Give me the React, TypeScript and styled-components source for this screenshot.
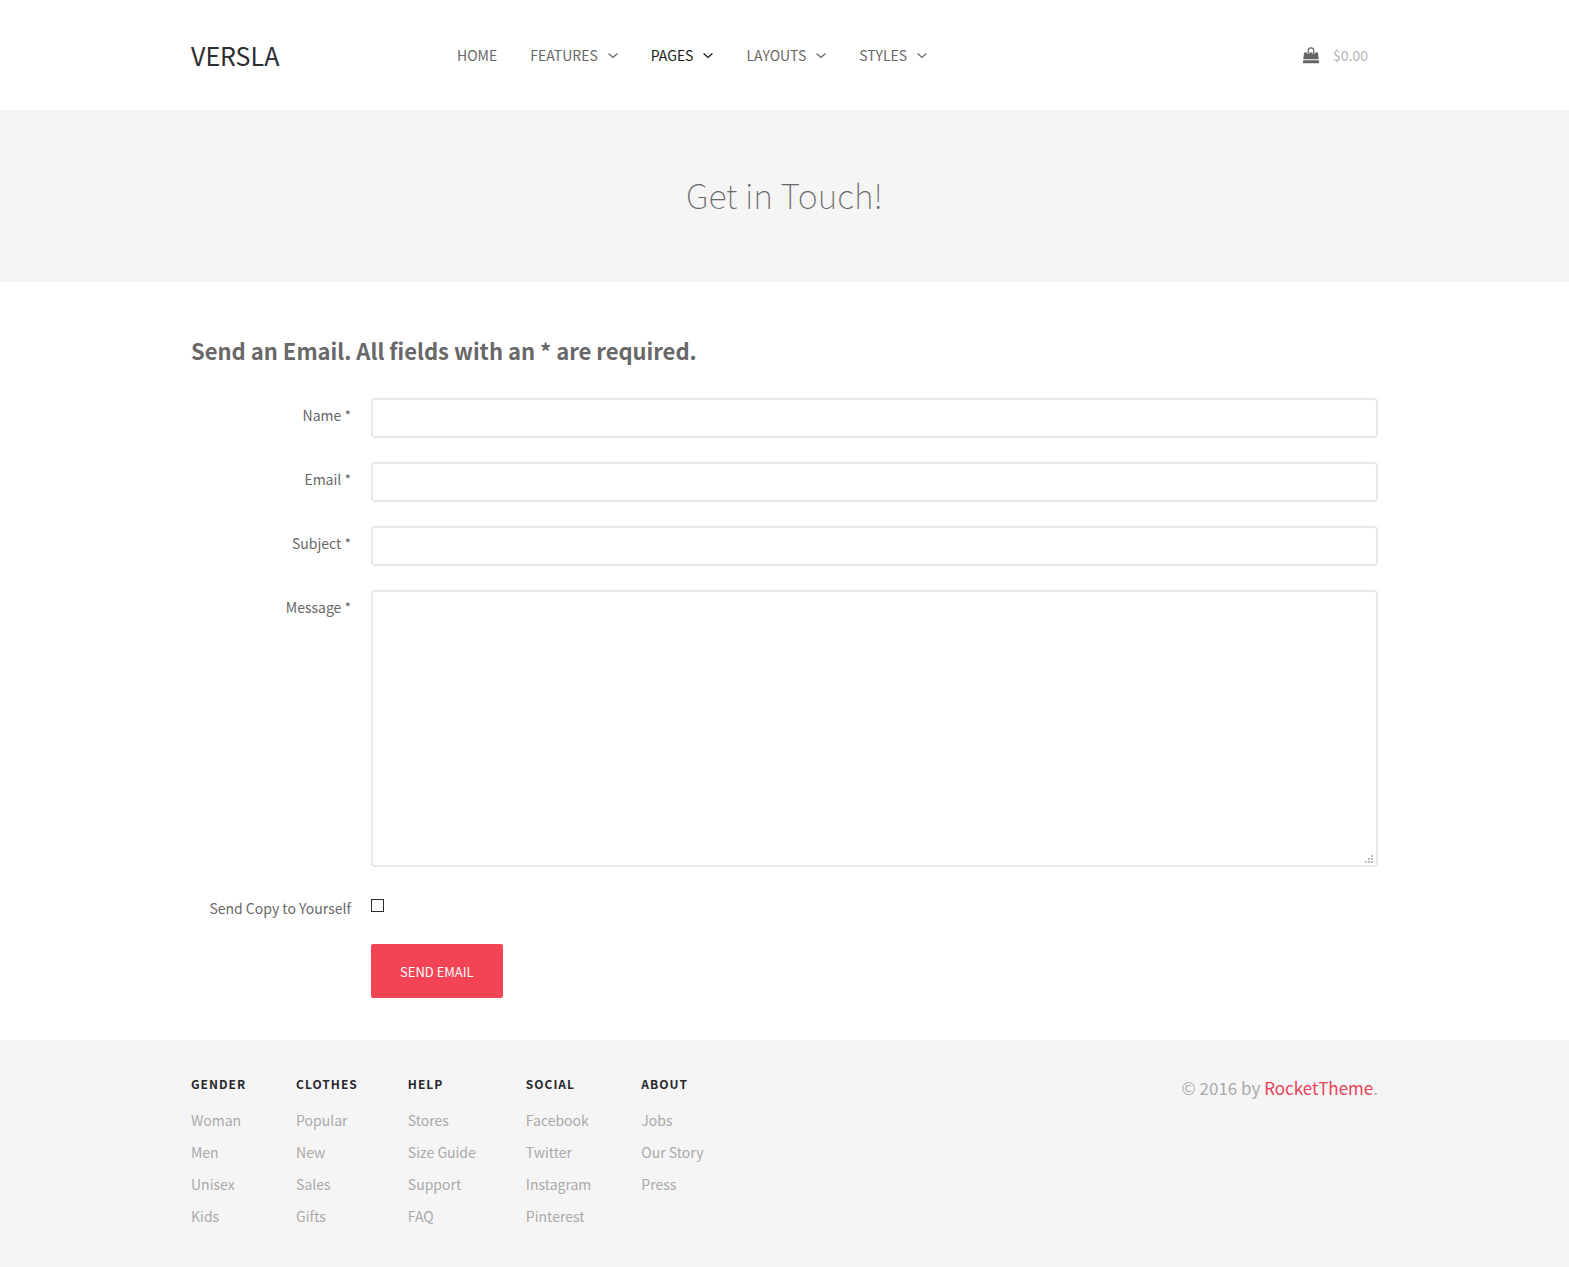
import React from 'react';
import styled, { createGlobalStyle } from 'styled-components';

const GlobalStyle = createGlobalStyle`
  *, *::before, *::after { box-sizing: border-box; }
  body {
    margin: 0;
    background: #fff;
    color: #686868;
    font-family: "Noto Sans CJK SC", "Noto Sans", sans-serif;
    font-size: 14px;
    line-height: 24px;
  }
  a { color: inherit; text-decoration: none; }
`;

const Container = styled.div`
  max-width: 1187px;
  margin: 0 auto;
`;

const HeaderRow = styled(Container)`
  display: grid;
  grid-template-columns: 266px 1fr auto;
  align-items: center;
  height: 110px;
`;

const Logo = styled.a`
  font-size: 25px;
  line-height: 32px;
  color: #2b2d31;
`;

const NavList = styled.ul`
  display: flex;
  gap: 33px;
  margin: 0;
  padding: 0;
  list-style: none;
`;

const NavLink = styled.a<{ $active?: boolean }>`
  display: flex;
  align-items: center;
  gap: 10px;
  color: ${(p) => (p.$active ? '#1c1d20' : '#686868')};
`;

const Cart = styled.a`
  display: flex;
  align-items: center;
  gap: 13px;
  padding-right: 10px;
  color: #b4b4b4;
`;

const Banner = styled.section`
  padding: 61px 0 63px;
  background: #f5f5f5;
  text-align: center;
`;

const BannerTitle = styled.h1`
  margin: 0;
  font-size: 34px;
  line-height: 48px;
  font-weight: 100;
`;

const Main = styled(Container)`
  padding: 52px 0 42px;
`;

const FormTitle = styled.h2`
  margin: 0 0 32px;
  font-size: 22px;
  line-height: 32px;
  font-weight: 700;
`;

const Row = styled.div`
  display: grid;
  grid-template-columns: 160px 1fr;
  column-gap: 20px;
  align-items: start;
  margin-bottom: 24px;
  &:last-child { margin-bottom: 0; }
`;

const Label = styled.label`
  padding-top: 5px;
  text-align: right;
`;

const fieldStyle = `
  display: block;
  width: 100%;
  margin: 0;
  padding: 6px 12px;
  border: 2px solid #e7e8e8;
  border-radius: 4px;
  background: #fff;
  color: inherit;
  font: inherit;
`;

const TextInput = styled.input`
  ${fieldStyle}
  height: 40px;
`;

const TextAreaBox = styled.div`
  position: relative;
`;

const TextArea = styled.textarea`
  ${fieldStyle}
  height: 277px;
  &::-webkit-resizer { background: transparent; }
`;

const Grip = styled.svg`
  position: absolute;
  right: 5px;
  bottom: 4px;
  pointer-events: none;
`;

const CheckCell = styled.div`
  display: flex;
  padding-top: 8px;
`;

const Checkbox = styled.input`
  appearance: none;
  width: 13px;
  height: 13px;
  margin: 0;
  border: 1px solid #2b2b2b;
  background: #fff;
  &:checked { background: #2b2b2b; }
`;

const Submit = styled.button`
  grid-column: 2;
  justify-self: start;
  padding: 16px 29px 14px;
  border: 0;
  border-radius: 2px;
  background: #f24455;
  color: #fff;
  font: inherit;
  font-size: 13px;
  line-height: 24px;
`;

const Footer = styled.footer`
  background: #f5f5f5;
  color: #aaa;
`;

const FooterRow = styled(Container)`
  display: flex;
  justify-content: space-between;
  padding: 32px 0 35px;
`;

const LinkColumns = styled.div`
  display: flex;
  gap: 50px;
`;

const ColumnTitle = styled.h3`
  margin: 0 0 8px;
  font-size: 12px;
  line-height: 24px;
  font-weight: 700;
  letter-spacing: 1px;
  color: #26282c;
`;

const LinkList = styled.ul`
  margin: 0;
  padding: 0;
  list-style: none;
  line-height: 32px;
`;

const Copyright = styled.p`
  margin: 0;
  font-size: 17px;
  line-height: 32px;
  a { color: #e94257; }
`;

const Chevron = () => (
  <svg width="10" height="8" viewBox="0 0 10 8" fill="none" stroke="currentColor" strokeWidth="1.3" aria-hidden="true">
    <path d="M0.6 2.4 L5 6.4 L9.4 2.4" />
  </svg>
);

const Bag = () => (
  <svg width="18" height="18" viewBox="0 -1 18 18" aria-hidden="true">
    <path fill="#646464" d="M2.1 5.4 H15.9 L16.7 12.2 H1.3 Z M1.2 13.2 H16.8 L17.1 16.2 H0.9 Z" />
    <path fill="none" stroke="#fff" strokeWidth="2.4" d="M6.2 5.2 V7 M11.8 5.2 V7" />
    <path fill="none" stroke="#646464" strokeWidth="1.2" d="M6.2 7 V3.6 a2.8 2.8 0 0 1 5.6 0 V7" />
  </svg>
);

const navItems = [
  { label: 'HOME' },
  { label: 'FEATURES', menu: true },
  { label: 'PAGES', menu: true, active: true },
  { label: 'LAYOUTS', menu: true },
  { label: 'STYLES', menu: true },
];

const fields = [
  { id: 'name', label: 'Name *', type: 'text' },
  { id: 'email', label: 'Email *', type: 'email' },
  { id: 'subject', label: 'Subject *', type: 'text' },
];

const columns = [
  { title: 'GENDER', links: ['Woman', 'Men', 'Unisex', 'Kids'] },
  { title: 'CLOTHES', links: ['Popular', 'New', 'Sales', 'Gifts'] },
  { title: 'HELP', links: ['Stores', 'Size Guide', 'Support', 'FAQ'] },
  { title: 'SOCIAL', links: ['Facebook', 'Twitter', 'Instagram', 'Pinterest'] },
  { title: 'ABOUT', links: ['Jobs', 'Our Story', 'Press'] },
];

export default function App() {
  return (
    <>
      <GlobalStyle />
      <header>
        <HeaderRow>
          <div><Logo href="#">VERSLA</Logo></div>
          <nav>
            <NavList>
              {navItems.map((item) => (
                <li key={item.label}>
                  <NavLink href="#" $active={item.active}>
                    {item.label}
                    {item.menu && <Chevron />}
                  </NavLink>
                </li>
              ))}
            </NavList>
          </nav>
          <Cart href="#"><Bag />$0.00</Cart>
        </HeaderRow>
      </header>
      <Banner>
        <BannerTitle>Get in Touch!</BannerTitle>
      </Banner>
      <Main as="main">
        <form onSubmit={(e) => e.preventDefault()}>
          <FormTitle>Send an Email. All fields with an * are required.</FormTitle>
          {fields.map((f) => (
            <Row key={f.id}>
              <Label htmlFor={f.id}>{f.label}</Label>
              <TextInput id={f.id} type={f.type} />
            </Row>
          ))}
          <Row>
            <Label htmlFor="message">Message *</Label>
            <TextAreaBox>
              <TextArea id="message" />
              <Grip width="8" height="8" viewBox="0 0 8 8" fill="#bbb" aria-hidden="true">
                <path d="M6 0h2v2H6z M3 3h2v2H3z M6 3h2v2H6z M0 6h2v2H0z M3 6h2v2H3z M6 6h2v2H6z" />
              </Grip>
            </TextAreaBox>
          </Row>
          <Row>
            <Label htmlFor="copy">Send Copy to Yourself</Label>
            <CheckCell><Checkbox id="copy" type="checkbox" /></CheckCell>
          </Row>
          <Row>
            <Submit type="submit">SEND EMAIL</Submit>
          </Row>
        </form>
      </Main>
      <Footer>
        <FooterRow>
          <LinkColumns>
            {columns.map((c) => (
              <div key={c.title}>
                <ColumnTitle>{c.title}</ColumnTitle>
                <LinkList>
                  {c.links.map((l) => (
                    <li key={l}><a href="#">{l}</a></li>
                  ))}
                </LinkList>
              </div>
            ))}
          </LinkColumns>
          <Copyright>© 2016 by <a href="#">RocketTheme</a>.</Copyright>
        </FooterRow>
      </Footer>
    </>
  );
}
